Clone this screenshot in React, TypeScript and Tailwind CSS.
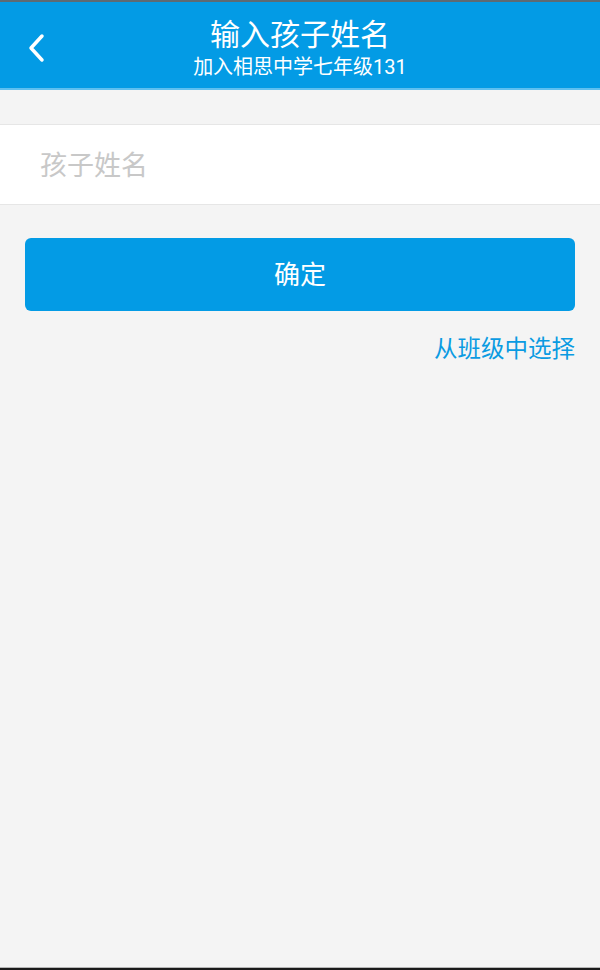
import React, { useState } from 'react';

const font = "font-['Roboto','Noto_Sans_CJK_SC',sans-serif]";

const App: React.FC = () => {
    const [name, setName] = useState('');

    return (
        <div className={`h-[970px] w-full flex flex-col bg-[#f4f4f4] ${font}`}>
            <div className="h-[2px] bg-[#5e6a72]" />
            {/* header */}
            <div className="h-[88px] bg-[#039be5] border-b-2 border-[#5ec0f0] flex relative">
                <button className="absolute left-[22px] top-[26px] p-1">
                    <svg width="22" height="32" viewBox="0 0 22 32" fill="none">
                        <path d="M16 4 L5 16 L16 28" stroke="white" strokeWidth="3.5" strokeLinecap="round" strokeLinejoin="round" />
                    </svg>
                </button>
                <div className="flex-1 flex flex-col items-center text-white pt-[15px]">
                    <h1 className="text-[30px] leading-[36px]">输入孩子姓名</h1>
                    <p className="text-[20px] leading-[24px] mt-[2px]">加入相思中学七年级131</p>
                </div>
            </div>

            {/* input */}
            <div className="mt-[34px] h-[81px] bg-white border-y border-[#e6e6e6] flex items-center px-[40px] pt-[4px]">
                <input
                    className="w-full text-[27px] text-[#333] placeholder:text-[#c8c8c8] outline-none bg-transparent"
                    placeholder="孩子姓名"
                    value={name}
                    onChange={(e) => setName(e.target.value)}
                />
            </div>

            <div className="px-[25px]">
                <button className="mt-[33px] w-full h-[73px] rounded-[6px] bg-[#039be5] text-white text-[26px] pt-[2px]">
                    确定
                </button>
                <div className="flex justify-end mt-[23px]">
                    <span className="text-[23.5px] leading-[30px] text-[#0a9be2]">从班级中选择</span>
                </div>
            </div>

            <div className="flex-1" />
            <div className="h-[1px] bg-[#b5b5b5]" />
            <div className="h-[2px] bg-[#1a1a1a]" />
        </div>
    );
};

export default App;
